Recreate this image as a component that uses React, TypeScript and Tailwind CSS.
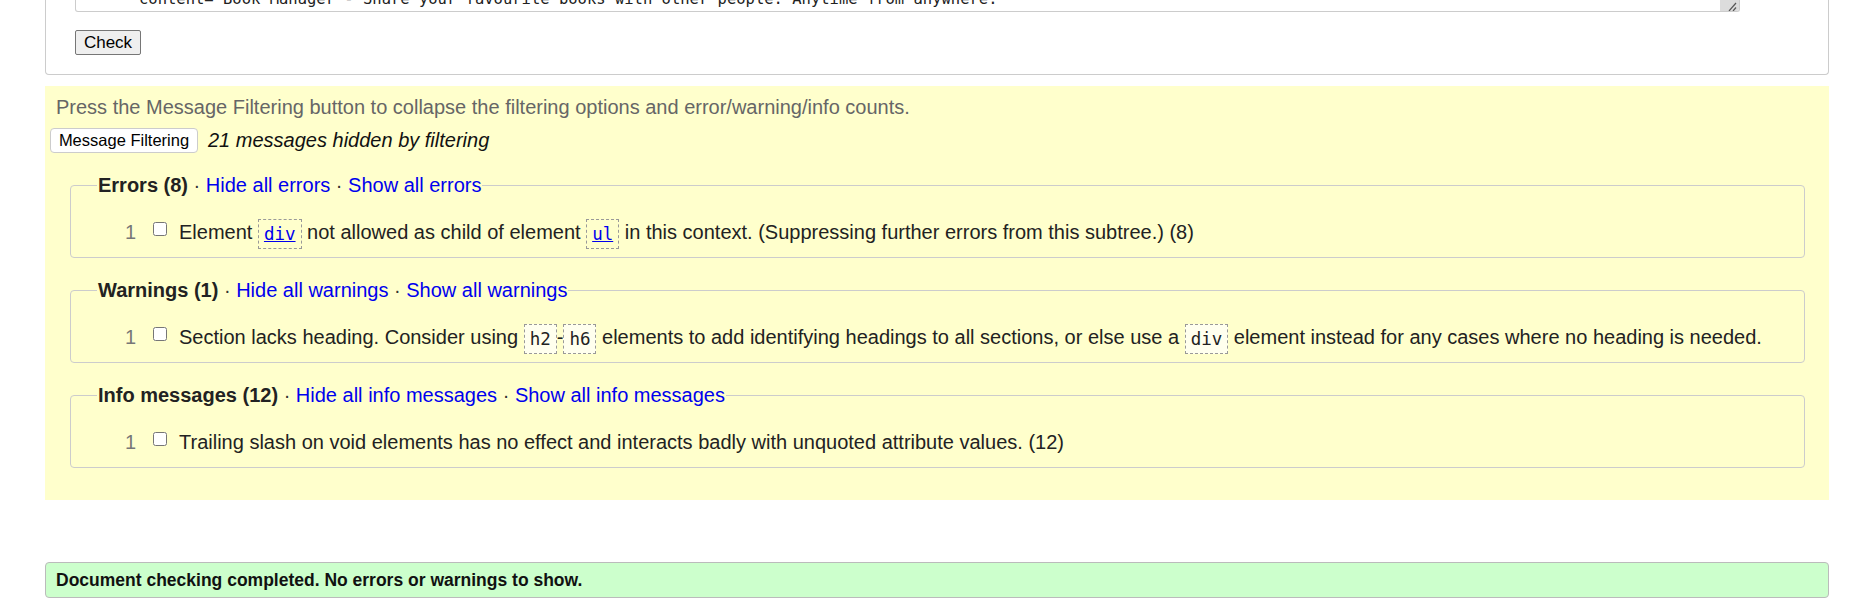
import type { ReactNode } from "react";

function Code({ children, link, light }: { children: ReactNode; link?: boolean; light?: boolean }) {
  return (
    <code
      className={
        "inline-block border border-dashed border-[#999999] px-[5px] py-[3px] align-middle font-['DejaVu_Sans_Mono',monospace] text-[17.5px] leading-[22px] " +
        (light ? "bg-[#ffffee] text-[#222222]" : "") +
        (link ? " text-[#0000ee] underline" : "")
      }
    >
      {children}
    </code>
  );
}

function Group({ title, noun, children }: { title: string; noun: string; children: ReactNode }) {
  return (
    <fieldset className="ml-[25px] mr-[24px] mt-[21px] rounded-[4px] border border-[#cccccc] px-[26px] pt-[20px] pb-[10px]">
      <legend className="px-[1px] text-[20px] leading-[23px]">
        <strong className="font-bold text-[#222222]">{title}</strong>
        <span className="text-[#333333]"> · </span>
        <a className="text-[#0000ee]">Hide all {noun}</a>
        <span className="text-[#333333]"> · </span>
        <a className="text-[#0000ee]">Show all {noun}</a>
      </legend>
      <div className="flex h-[30px] items-start overflow-visible pl-[28px] text-[20px] leading-[30px] text-[#222222]">
        <span className="w-[11px] text-[#777777]">1</span>
        <input type="checkbox" className="ml-[17px] mt-[5px] h-[14px] w-[14px]" />
        <span className="ml-[12px] whitespace-nowrap">{children}</span>
      </div>
    </fieldset>
  );
}

export default function App() {
  return (
    <div className="min-h-[608px] bg-white pl-[45px] pr-[34px] font-['Liberation_Sans',Arial,sans-serif] text-[#222222]">
      {/* source form, its top is scrolled away */}
      <div className="rounded-b-[4px] border-x border-b border-[#cccccc] pb-[19px]">
        <div className="ml-[29px] flex h-[12px] w-[1665px] overflow-hidden rounded-b-[3px] border-x border-b border-[#cccccc]">
          <div className="flex-1 overflow-hidden">
            <div className="-mt-[10px] whitespace-pre pl-[63px] font-['DejaVu_Sans_Mono',monospace] text-[15.5px] leading-[18px] text-[#222222]">
              content="Book Manager - Share your favourite books with other people. Anytime from anywhere."
            </div>
          </div>
          <div className="w-[19px] bg-[#dcdcdc]">
            <svg width="19" height="11" viewBox="0 0 19 11">
              <line x1="9" y1="11" x2="16" y2="3" stroke="#555" strokeWidth="1.2" />
              <line x1="13" y1="11" x2="16" y2="7.5" stroke="#555" strokeWidth="1.2" />
            </svg>
          </div>
        </div>
        <button className="ml-[29px] mt-[18px] h-[25px] w-[66px] rounded-[2px] border border-[#767676] bg-[#efefef] text-[17px] leading-[23px] text-black">
          Check
        </button>
      </div>

      {/* filtering */}
      <div className="mt-[11px] bg-[#ffffcc] pt-[10px] pb-[32px]">
        <p className="ml-[11px] text-[20px] leading-[23px] text-[#666666]">
          Press the Message Filtering button to collapse the filtering options and error/warning/info counts.
        </p>
        <div className="mt-[9px] flex items-center">
          <button className="ml-[5px] h-[25px] w-[148px] rounded-[4px] border border-[#cccccc] bg-white text-[16.5px] leading-[23px] text-black">
            Message Filtering
          </button>
          <span className="ml-[10px] text-[20px] italic leading-[23px] text-[#111111]">21 messages hidden by filtering</span>
        </div>

        <Group title="Errors (8)" noun="errors">
          Element <Code link>div</Code> not allowed as child of element <Code link>ul</Code> in this context.
          (Suppressing further errors from this subtree.) (8)
        </Group>

        <Group title="Warnings (1)" noun="warnings">
          Section lacks heading. Consider using <Code light>h2</Code>-<Code light>h6</Code> elements to add
          identifying headings to all sections, or else use a <Code light>div</Code> element instead for any cases
          where no heading is needed.
        </Group>

        <Group title="Info messages (12)" noun="info messages">
          Trailing slash on void elements has no effect and interacts badly with unquoted attribute values. (12)
        </Group>
      </div>

      <div className="mt-[62px] rounded-[4px] border border-[#bbbbbb] bg-[#ccffcc] pl-[10px] text-[17.5px] font-bold leading-[34px] text-[#111111]">
        Document checking completed. No errors or warnings to show.
      </div>
    </div>
  );
}
